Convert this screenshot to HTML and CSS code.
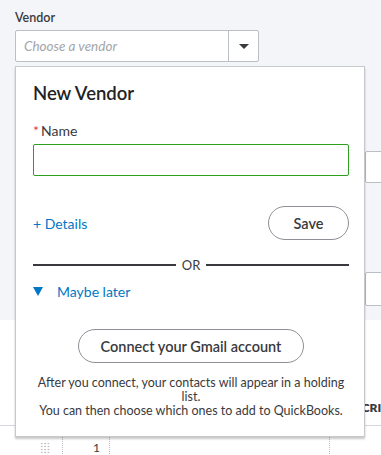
FILE: index.html
```html
<!DOCTYPE html>
<html lang="en">
<head>
    <meta charset="UTF-8">
    <meta name="viewport" content="width=device-width, initial-scale=1.0">
    <title>Vendor</title>
    <link rel="stylesheet" href="styles.css">
</head>
<body>
    <div class="top">
        <label class="field-label">Vendor</label>
        <div class="vendor-select">
            <span class="placeholder">Choose a vendor</span>
            <span class="select-arrow"><span class="caret"></span></span>
        </div>
        <div class="right-col">
            <div class="side-input"></div>
            <div class="side-input lower"></div>
        </div>
    </div>

    <div class="table">
        <div class="thead">
            <div class="cell c-drag"></div>
            <div class="cell c-num"></div>
            <div class="cell c-prod"></div>
            <div class="cell c-desc">DESCRIPTION</div>
        </div>
        <div class="trow">
            <div class="cell c-drag"><span class="grip"></span></div>
            <div class="cell c-num">1</div>
            <div class="cell c-prod"></div>
            <div class="cell c-desc"></div>
        </div>
    </div>

    <!-- dropdown popup over the vendor field -->
    <div class="popup">
        <h2 class="popup-title">New Vendor</h2>
        <div class="name-label"><span class="req">*</span>Name</div>
        <div class="name-input"></div>

        <div class="details-row">
            <a class="link">+ Details</a>
            <button class="pill save">Save</button>
        </div>

        <div class="or-divider">
            <span class="line"></span>
            <span class="or">OR</span>
            <span class="line"></span>
        </div>

        <div class="maybe">
            <span class="tri"></span>
            <a class="link">Maybe later</a>
        </div>

        <div class="connect">
            <button class="pill gmail">Connect your Gmail account</button>
            <p class="hint">After you connect, your contacts will appear in a holding<br>list.<br>You can then choose which ones to add to QuickBooks.</p>
        </div>
    </div>
</body>
</html>
```

FILE: styles.css
```css
html, body {
    margin: 0;
    overflow: hidden;
}
body {
    font-family: Lato, 'Noto Sans', sans-serif;
    color: #393a3d;
    background-color: #fff;
    position: relative;
    width: 381px;
    height: 455px;
}
.top {
    background-color: #f4f5f8;
    height: 320px;
    box-sizing: border-box;
    padding: 10px 0 0 15px;
}
.field-label {
    display: block;
    font-size: 12.5px;
    font-weight: 600;
    line-height: 16px;
    color: #393a3d;
}
.vendor-select {
    margin-top: 4px;
    width: 244px;
    height: 32px;
    box-sizing: border-box;
    border: 1px solid #babec5;
    border-radius: 2px;
    background-color: #fff;
    display: flex;
    align-items: center;
}
.placeholder {
    flex: 1;
    padding-left: 8px;
    font-size: 13.5px;
    font-style: italic;
    color: #a3a6ab;
}
.select-arrow {
    width: 29px;
    height: 100%;
    border-left: 1px solid #babec5;
    display: flex;
    align-items: center;
    justify-content: center;
}
.caret {
    width: 0;
    height: 0;
    border-left: 5px solid transparent;
    border-right: 5px solid transparent;
    border-top: 5px solid #393a3d;
}
.right-col {
    margin-left: 350px;
}
.side-input {
    margin-top: 89px;
    height: 32px;
    box-sizing: border-box;
    border: 1px solid #babec5;
    border-radius: 2px;
    background-color: #fff;
    width: 200px;
}
.side-input.lower {
    margin-top: 89px;
    height: 34px;
}

.table {
    padding-top: 69px;
}
.thead, .trow {
    display: flex;
    font-size: 12px;
}
.thead {
    height: 36px;
    border-bottom: 1px solid #d4d7dc;
    font-weight: 800;
    color: #393a3d;
    align-items: center;
}
.trow {
    height: 40px;
}
.cell {
    box-sizing: border-box;
    flex-shrink: 0;
}
.c-drag { width: 63px; }
.c-num { width: 47px; }
.c-prod { width: 220px; }
.c-desc { width: 200px; padding-left: 9px; }
.trow .cell {
    border-right: 1px dotted #b8bbc1;
    display: flex;
    padding-top: 15px;
    line-height: 14px;
}
.trow .c-drag { padding-left: 40px; padding-top: 16px; }
.trow .c-num { justify-content: flex-end; padding-right: 9px; }
.trow .c-desc { border-right: none; }
.grip {
    width: 10px;
    height: 12px;
    background-image: radial-gradient(circle, #b9bcc2 0.9px, transparent 1.1px);
    background-size: 3.4px 3px;
}

.popup {
    position: absolute;
    top: 66px;
    left: 15px;
    width: 350px;
    height: 371px;
    box-sizing: border-box;
    background-color: #fff;
    border: 1px solid #c6c8cc;
    box-shadow: 0 2px 2px rgba(0, 0, 0, 0.22);
    padding: 14px 15px 0 17px;
}
.popup-title {
    margin: 0;
    font-size: 18.5px;
    font-weight: 600;
    line-height: 24px;
    color: #222;
}
.name-label {
    margin-top: 16px;
    font-size: 14px;
    line-height: 20px;
}
.req {
    color: #e4413a;
    margin-right: 2px;
}
.name-input {
    margin-top: 3px;
    height: 32px;
    box-sizing: border-box;
    border: 1px solid #2ca01c;
    border-radius: 2px;
}
.details-row {
    margin-top: 30px;
    display: flex;
    align-items: center;
    justify-content: space-between;
}
.link {
    color: #0077c5;
    font-size: 14px;
    cursor: pointer;
}
.pill {
    font-family: inherit;
    background-color: #fff;
    border: 1px solid #8d9096;
    border-radius: 18px;
    color: #393a3d;
    font-size: 14.5px;
    font-weight: 600;
    cursor: pointer;
}
.save {
    width: 81px;
    height: 34px;
}
.or-divider {
    margin-top: 17px;
    height: 16px;
    display: flex;
    align-items: center;
}
.or-divider .line {
    flex: 1;
    height: 2px;
    background-color: #393a3d;
}
.or {
    padding: 0 6px;
    font-size: 13px;
}
.maybe {
    margin-top: 8px;
    display: flex;
    align-items: center;
    height: 20px;
}
.tri {
    width: 0;
    height: 0;
    border-left: 5px solid transparent;
    border-right: 5px solid transparent;
    border-top: 9px solid #0077c5;
    margin-right: 14px;
}
.connect {
    margin-top: 28px;
    text-align: center;
}
.gmail {
    width: 226px;
    height: 34px;
}
.hint {
    margin: 13px 0 0;
    font-size: 12.5px;
    line-height: 14px;
    color: #393a3d;
}
```
